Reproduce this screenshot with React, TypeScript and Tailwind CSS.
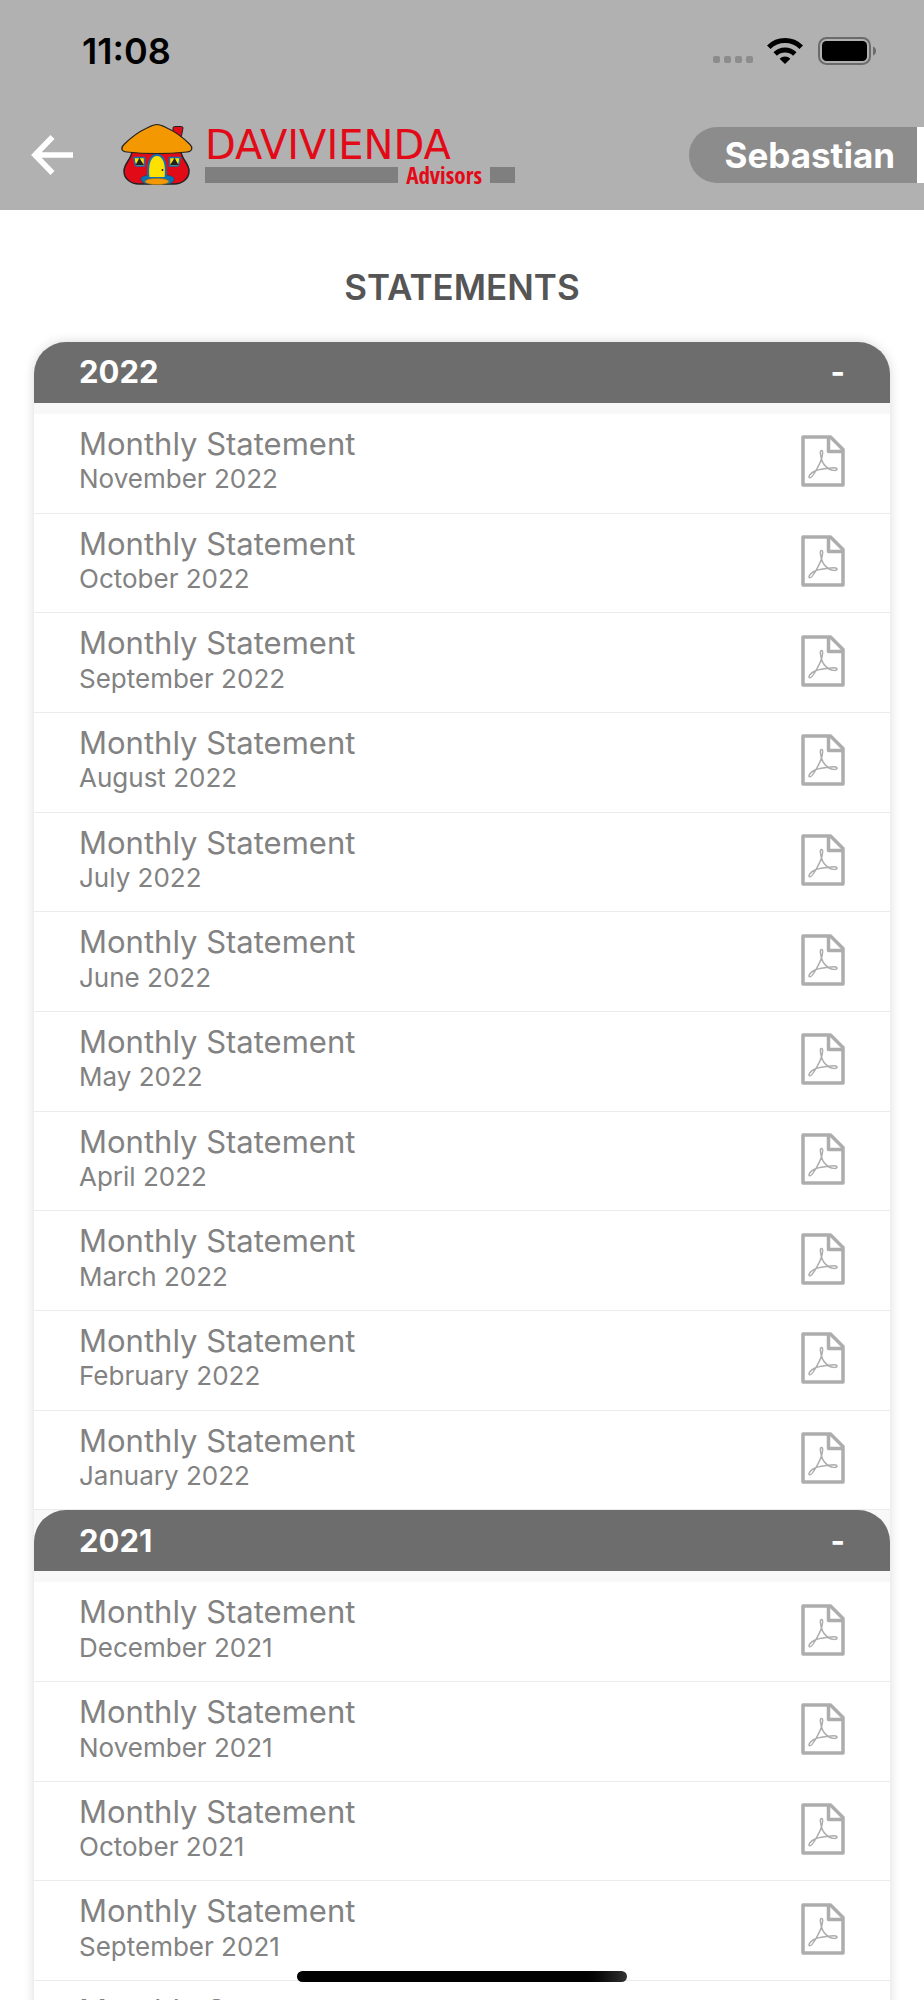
import { useState } from "react";

const years = [
  {
    year: "2022",
    months: [
      "November",
      "October",
      "September",
      "August",
      "July",
      "June",
      "May",
      "April",
      "March",
      "February",
      "January",
    ],
  },
  {
    year: "2021",
    months: ["December", "November", "October", "September", "August"],
  },
];

function WifiIcon() {
  return (
    <svg width="36" height="26" viewBox="0 0 36 26" aria-hidden="true">
      <g fill="none" stroke="#000" strokeWidth="5">
        <path d="M1.8 9.2a23 23 0 0 1 32.4 0" />
        <path d="M8.2 16a14 14 0 0 1 19.6 0" />
      </g>
      <path d="M18 26l-5.4-5.3a7.8 7.8 0 0 1 10.8 0z" fill="#000" />
    </svg>
  );
}

function BatteryIcon() {
  return (
    <svg width="60" height="28" viewBox="0 0 60 28" aria-hidden="true">
      <rect x="1" y="1" width="51" height="26" rx="7.5" fill="none" stroke="#6b6b6b" strokeWidth="2" />
      <rect x="4" y="4" width="45" height="20" rx="4.5" fill="#000" />
      <path d="M55 9.5c4 1.5 4 7.5 0 9z" fill="#6b6b6b" />
    </svg>
  );
}

function StatusBar() {
  return (
    <div className="flex h-[101px] items-center justify-between pr-[46px] pl-[82px]">
      <span className="text-[36px] font-semibold text-black">11:08</span>
      <div className="flex items-center">
        <div className="mt-[18px] mr-[14px] flex gap-1">
          <span className="size-[7px] rounded-xs bg-[#8c8c8c]" />
          <span className="size-[7px] rounded-xs bg-[#8c8c8c]" />
          <span className="size-[7px] rounded-xs bg-[#8c8c8c]" />
          <span className="size-[7px] rounded-xs bg-[#8c8c8c]" />
        </div>
        <div className="mr-[15px]">
          <WifiIcon />
        </div>
        <BatteryIcon />
      </div>
    </div>
  );
}

function HouseLogo() {
  return (
    <svg width="74" height="64" viewBox="0 0 74 64" aria-hidden="true">
      <path d="M53 13V5q0-1.5 1.5-1.5h7q1.500 0 1.500 1.500l-2.500 13z" fill="#e30a17" stroke="#222" />
      <path
        d="M12 28c0 8-8 12-8 20 0 8 7 13 15 13h35c8 0 15-5 15-13 0-8-8-12-8-20z"
        fill="#e30a17"
        stroke="#222"
        strokeWidth="1.5"
      />
      <path
        d="M37 1.500c4 0 6 1.500 11 4 9 4 15 9 22 16 3 3 2.500 7-3 7.500-20 2-42 2-60 0C1 28.500.5 25 4 21.500c7-7 13-12 22-16 5-2.500 7-4 11-4z"
        fill="#f39800"
        stroke="#222"
        strokeWidth="1.2"
      />
      <path d="M28 52c-5 1-8 2-7 5 1 2 3 4 6 4h21c3 0 5-2 6-4 1-3-2-4-7-5z" fill="#0a72b5" stroke="#333" strokeWidth=".5" />
      <path d="M28.500 55C27 41 30 32 37 32s10 9 8.500 23z" fill="#ffe100" stroke="#0a72b5" strokeWidth="2" />
      <ellipse cx="37" cy="58.5" rx="12" ry="3.2" fill="#f39800" stroke="#8a6a20" strokeWidth=".6" />
      <circle cx="42.5" cy="47" r="1" fill="#222" />
      <path d="M14 34.500h10.500V43H16q-2-4-2-8.500z" fill="#ffe100" stroke="#0a72b5" strokeWidth="1.5" />
      <path d="M49.500 34.500H60q0 4.500-2 8.500h-8.500z" fill="#ffe100" stroke="#0a72b5" strokeWidth="1.5" />
      <path d="M19.500 34.500l1.500 3 3 4.500h-8.500l2.500-4.500z" fill="#222" />
      <path d="M54.500 34.500l1.500 3 2.500 4.500H50l3-4.500z" fill="#222" />
    </svg>
  );
}

function Brand() {
  return (
    <div className="flex items-center gap-[11px]">
      <HouseLogo />
      <div className="w-[310px] text-[#e30a17]">
        <div className="font-['DejaVu_Sans',sans-serif] text-[40px] leading-10">DAVIVIENDA</div>
        <div className="flex h-5 items-center gap-2">
          <span className="h-4 flex-1 bg-[#7f7f7f]" />
          <span className="font-['Liberation_Sans_Narrow','Open_Sans_Condensed',sans-serif] text-[23px] leading-5 font-bold">
            Advisors
          </span>
          <span className="h-4 w-[25px] bg-[#7f7f7f]" />
        </div>
      </div>
    </div>
  );
}

function Header() {
  return (
    <header className="shrink-0 bg-[#b1b1b1]">
      <StatusBar />
      <div className="flex h-[109px] items-center pb-[2px] pl-[31px]">
        <button type="button" aria-label="Back" className="mr-[47px]">
          <svg width="42" height="40" viewBox="0 0 42 40" fill="none" stroke="#fff" strokeWidth="5.6" aria-hidden="true">
            <path d="M21.500 2L4 20l17.500 18M4 20h38" />
          </svg>
        </button>
        <Brand />
        <button
          type="button"
          className="ml-auto h-14 rounded-l-full bg-[#8c8c8c] pr-[22px] pl-[35px] text-[35px] leading-[56px] font-bold text-white"
        >
          Sebastian
        </button>
        <span className="h-14 w-[7px] bg-white" />
      </div>
    </header>
  );
}

function PdfIcon() {
  return (
    <svg width="44" height="52" viewBox="0 0 44 52" fill="none" stroke="#adadad" aria-hidden="true">
      <g strokeWidth="3.5" strokeLinejoin="round">
        <path d="M2 2h27.500L42 14.500V50H2z" />
        <path d="M27.500 2v14.500H42" />
      </g>
      <path
        d="M20.500 15.500C22.500 15.500 21.500 20 20.500 24C19 28.500 17.500 31 15 35.500C13 39 10 43.500 8.500 42.800C7 42 9 38 15 35.500C20 34 26 33.500 30 33C34 32.500 36.500 33.200 36 34.500C35.500 36 31 35.500 28 34C24 31.500 21.500 28 20.500 24C19.500 20 18.500 15.500 20.500 15.500Z"
        strokeWidth="1.5"
      />
    </svg>
  );
}

function StatementRow({ period }: { period: string }) {
  return (
    <li className="border-b border-[#ebebeb] bg-white">
      <button
        type="button"
        className="flex w-full items-center justify-between pt-[11px] pr-[45px] pb-[15px] pl-[45px] text-left leading-[1.24] text-[#828282]"
      >
        <span className="pb-[2px]">
          <span className="block text-[31px]">Monthly Statement</span>
          <span className="block text-[26px]">{period}</span>
        </span>
        <PdfIcon />
      </button>
    </li>
  );
}

function YearSection({ year, months }: { year: string; months: string[] }) {
  const [open, setOpen] = useState(true);

  return (
    <section>
      <button
        type="button"
        aria-expanded={open}
        onClick={() => setOpen(!open)}
        className="flex h-[61px] w-full items-center justify-between rounded-t-[32px] bg-[#6d6d6d] pr-[45px] pl-[45px] text-[31px] font-bold text-white"
      >
        <span>{year}</span>
        <span>{open ? "-" : "+"}</span>
      </button>
      {open && (
        <ul className="pt-[11px]">
          {months.map((month) => (
            <StatementRow key={month} period={`${month} ${year}`} />
          ))}
        </ul>
      )}
    </section>
  );
}

export default function App() {
  return (
    <div className="relative flex h-screen flex-col overflow-hidden bg-white font-['Inter',sans-serif]">
      <Header />
      <main className="flex-1 overflow-y-auto px-[34px] [scrollbar-width:none]">
        <h1 className="pt-[53px] pb-[31px] text-center text-[35px] leading-[48px] font-semibold text-[#555555]">
          STATEMENTS
        </h1>
        <div className="rounded-t-[32px] bg-[#f8f8f8] shadow-[0_0_12px_rgba(0,0,0,0.15)]">
          {years.map(({ year, months }) => (
            <YearSection key={year} year={year} months={months} />
          ))}
        </div>
      </main>
      {/* home indicator */}
      <div className="absolute bottom-[18px] left-1/2 h-[11px] w-[330px] -translate-x-1/2 rounded-full bg-linear-to-r from-black from-85% to-[#333333]" />
    </div>
  );
}
